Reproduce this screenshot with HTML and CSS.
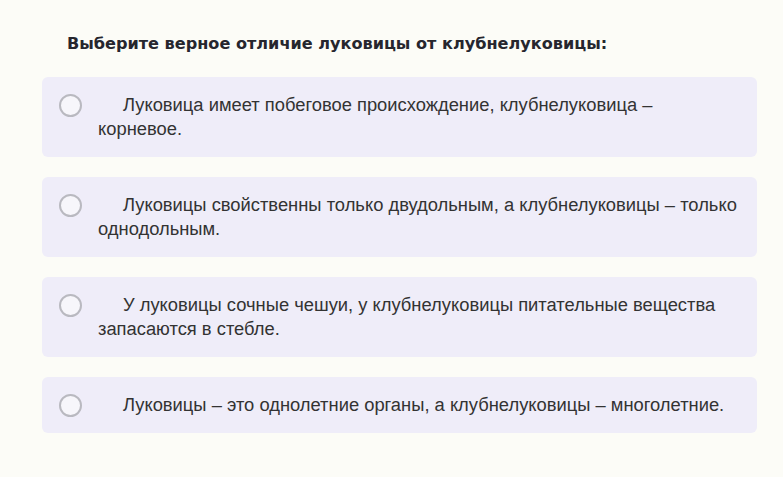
FILE: index.html
```html
<!DOCTYPE html>
<html lang="ru">
<head>
    <meta charset="UTF-8">
    <title>Тест</title>
    <link rel="stylesheet" href="styles.css">
</head>
<body>
    <div class="quiz">
        <h3 class="question">Выберите верное отличие луковицы от клубнелуковицы:</h3>
        <div class="option">
            <span class="radio"></span>
            <p class="answer">Луковица имеет побеговое происхождение, клубнелуковица –<br>корневое.</p>
        </div>
        <div class="option">
            <span class="radio"></span>
            <p class="answer">Луковицы свойственны только двудольным, а клубнелуковицы – только однодольным.</p>
        </div>
        <div class="option">
            <span class="radio"></span>
            <p class="answer">У луковицы сочные чешуи, у клубнелуковицы питательные вещества запасаются в стебле.</p>
        </div>
        <div class="option">
            <span class="radio"></span>
            <p class="answer">Луковицы – это однолетние органы, а клубнелуковицы – многолетние.</p>
        </div>
    </div>
</body>
</html>
```

FILE: styles.css
```css
body {
    margin: 0;
    padding: 0;
    background-color: #fcfcf7;
    font-family: "Liberation Sans", Arial, sans-serif;
    color: #333;
}
.quiz {
    width: 715px;
    margin-left: 42px;
    padding-top: 32px;
}
.question {
    margin: 0 0 21px 25px;
    font-family: "DejaVu Sans", sans-serif;
    font-size: 16.1px;
    line-height: 24px;
    font-weight: bold;
    color: #26262e;
}
.option {
    display: flex;
    align-items: flex-start;
    background-color: #efedf9;
    border-radius: 6px;
    padding: 16px 14px 16px 17px;
    margin-bottom: 20px;
}
.radio {
    flex-shrink: 0;
    width: 19px;
    height: 19px;
    margin-top: 1px;
    border: 2px solid #b9b9c0;
    border-radius: 50%;
    background-color: #f7f6fb;
}
.answer {
    margin: 0 0 0 16px;
    font-size: 18.35px;
    line-height: 24px;
    text-indent: 25px;
}
```
